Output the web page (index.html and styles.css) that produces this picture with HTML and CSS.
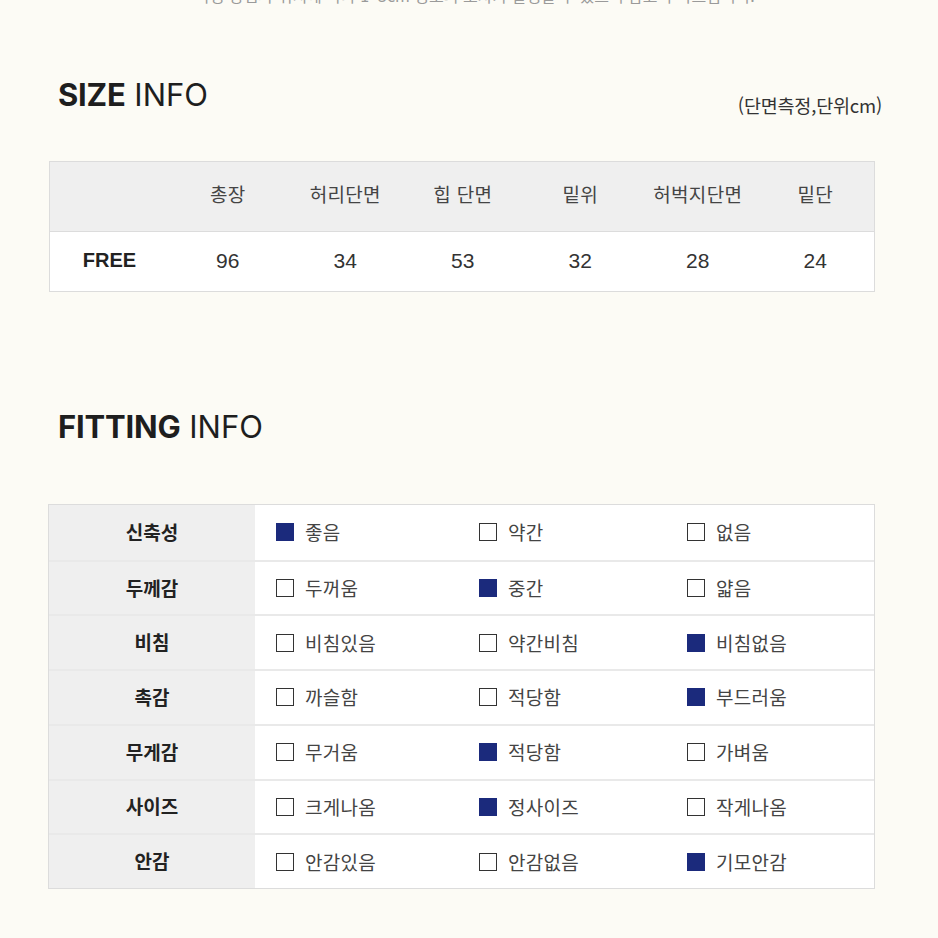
FILE: index.html
```html
<!DOCTYPE html>
<html lang="ko">
<head>
<meta charset="utf-8">
<title>SIZE INFO / FITTING INFO</title>
<link rel="stylesheet" href="styles.css">
</head>
<body>
<div class="top-note"><p>* 측정 방법과 위치에 따라 1~3cm 정도의 오차가 발생할 수 있으니 참고 부탁드립니다.</p></div>

<section class="size">
  <div class="head">
    <h2 class="title"><b>SIZE</b> INFO</h2>
    <span class="unit">(단면측정,단위cm)</span>
  </div>
  <div class="size-table">
    <div class="st-row st-head">
      <div></div><div>총장</div><div>허리단면</div><div>힙 단면</div><div>밑위</div><div>허벅지단면</div><div>밑단</div>
    </div>
    <div class="st-row st-body">
      <div class="free">FREE</div><div>96</div><div>34</div><div>53</div><div>32</div><div>28</div><div>24</div>
    </div>
  </div>
</section>

<section class="fitting">
  <div class="head">
    <h2 class="title"><b>FITTING</b> INFO</h2>
  </div>
  <div class="fit-table">
    <div class="fit-row"><div class="label">신축성</div><div class="opts"><span class="opt"><i class="box on"></i>좋음</span><span class="opt"><i class="box"></i>약간</span><span class="opt"><i class="box"></i>없음</span></div></div>
    <div class="fit-row"><div class="label">두께감</div><div class="opts"><span class="opt"><i class="box"></i>두꺼움</span><span class="opt"><i class="box on"></i>중간</span><span class="opt"><i class="box"></i>얇음</span></div></div>
    <div class="fit-row"><div class="label">비침</div><div class="opts"><span class="opt"><i class="box"></i>비침있음</span><span class="opt"><i class="box"></i>약간비침</span><span class="opt"><i class="box on"></i>비침없음</span></div></div>
    <div class="fit-row"><div class="label">촉감</div><div class="opts"><span class="opt"><i class="box"></i>까슬함</span><span class="opt"><i class="box"></i>적당함</span><span class="opt"><i class="box on"></i>부드러움</span></div></div>
    <div class="fit-row"><div class="label">무게감</div><div class="opts"><span class="opt"><i class="box"></i>무거움</span><span class="opt"><i class="box on"></i>적당함</span><span class="opt"><i class="box"></i>가벼움</span></div></div>
    <div class="fit-row"><div class="label">사이즈</div><div class="opts"><span class="opt"><i class="box"></i>크게나옴</span><span class="opt"><i class="box on"></i>정사이즈</span><span class="opt"><i class="box"></i>작게나옴</span></div></div>
    <div class="fit-row"><div class="label">안감</div><div class="opts"><span class="opt"><i class="box"></i>안감있음</span><span class="opt"><i class="box"></i>안감없음</span><span class="opt"><i class="box on"></i>기모안감</span></div></div>
  </div>
</section>
</body>
</html>
```
FILE: styles.css
```css
* { box-sizing: border-box; }
html, body { margin: 0; padding: 0; }
body {
  background: #fcfbf5;
  font-family: "Noto Sans CJK KR", "Noto Sans", sans-serif;
  color: #333;
  width: 938px;
}
.top-note {
  height: 5px;
  overflow: hidden;
}
.top-note p {
  margin: -15px 0 0;
  line-height: 20px;
  font-size: 16px;
  color: #9a9a9a;
  text-align: center;
}
.head {
  display: flex;
  justify-content: space-between;
  align-items: flex-end;
  margin: 0 56px 0 58px;
}
.title {
  margin: 0;
  font-family: "Inter", "Liberation Sans", sans-serif;
  font-size: 31px;
  line-height: 36px;
  font-weight: 400;
  color: #1e1e1e;
  letter-spacing: 0;
}
.title b { font-weight: 700; letter-spacing: -0.2px; }
.size .head { margin-top: 72px; }
.unit {
  font-size: 18.5px;
  line-height: 22px;
  color: #333;
  letter-spacing: -0.2px;
  margin-bottom: -3px;
}
.size-table {
  margin: 48px 63px 0 49px;
  border: 1px solid #dcdcdc;
  background: #fff;
}
.st-row {
  display: grid;
  grid-template-columns: 119px repeat(6, 1fr);
  align-items: center;
  text-align: center;
}
.st-head {
  height: 70px;
  background: #efefef;
  border-bottom: 1px solid #dcdcdc;
  font-size: 19px;
  letter-spacing: 0.3px;
  color: #444;
  padding-bottom: 6px;
}
.st-body {
  height: 59px;
  font-family: "Liberation Sans", Arial, sans-serif;
  font-size: 21px;
  color: #333;
  padding-bottom: 2px;
}
.st-body .free {
  font-weight: 700;
  font-size: 20px;
  color: #222;
}
.fitting .head { margin-top: 117px; }
.fit-table {
  margin: 59px 63px 0 48px;
  height: 385px;
  border: 1px solid #dcdcdc;
  display: grid;
  grid-template-rows: repeat(7, 1fr);
  background: #fff;
}
.fit-row {
  display: grid;
  grid-template-columns: 206px 1fr;
  border-top: 2px solid #e9e9e9;
}
.fit-row:first-child { border-top: 0; }
.label {
  background: #efefef;
  display: flex;
  align-items: center;
  justify-content: center;
  font-size: 19px;
  font-weight: 700;
  color: #222;
  padding-bottom: 2px;
}
.opts {
  display: grid;
  grid-template-columns: 203px 208px 1fr;
  align-items: center;
  padding-left: 21px;
}
.opt {
  display: flex;
  align-items: center;
  gap: 11px;
  font-size: 19px;
  letter-spacing: 0.3px;
  color: #444;
  line-height: 24px;
}
.box {
  width: 18px;
  height: 18px;
  border: 1.5px solid #333;
  background: #fff;
  flex: none;
}
.box.on {
  background: #1b2a7c;
  border-color: #1b2a7c;
}
```
